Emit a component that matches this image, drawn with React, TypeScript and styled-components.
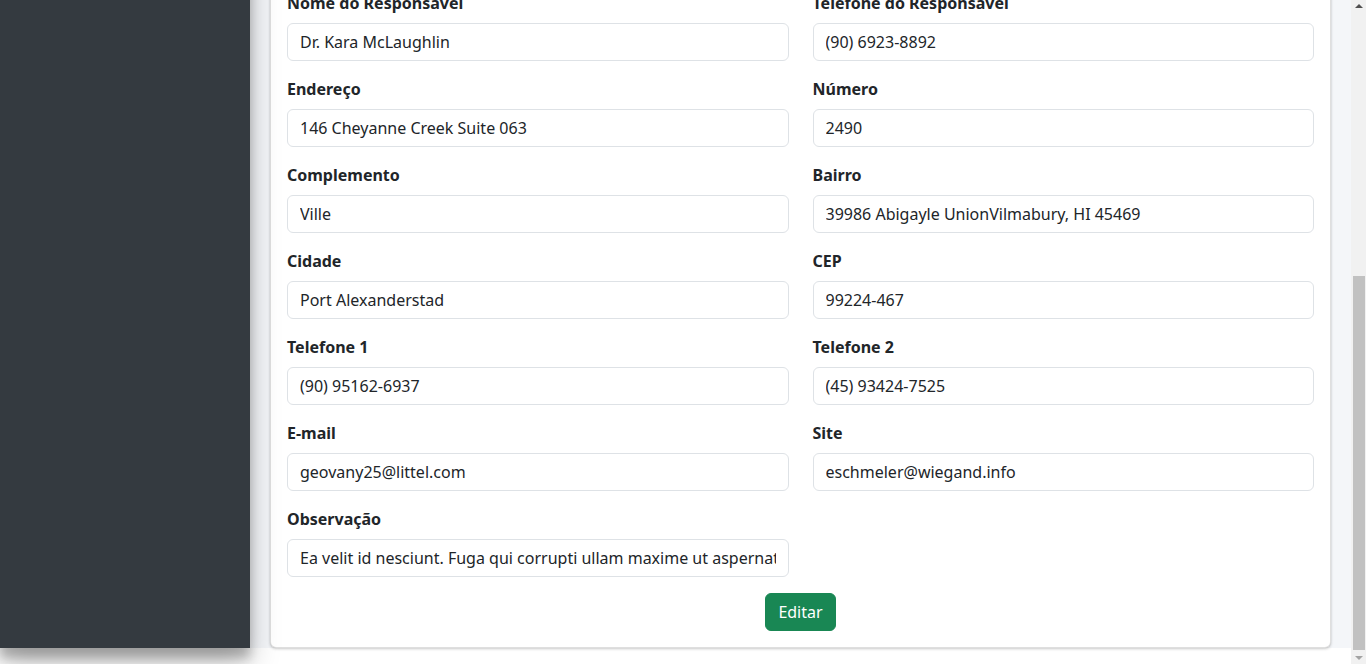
import React, { useLayoutEffect, useEffect } from "react";
import styled, { createGlobalStyle } from "styled-components";

const GlobalStyle = createGlobalStyle`
  html, body {
    margin: 0;
    padding: 0;
    background: #ffffff;
  }
  body {
    font-family: "Noto Sans", "Liberation Sans", sans-serif;
    font-size: 16px;
    line-height: 24px;
    color: #212529;
  }
  *, *::before, *::after { box-sizing: border-box; }
`;

const Wrapper = styled.div`
  display: flex;
  align-items: stretch;
  margin-bottom: 16px;
  margin-right: 15px;
`;

const Sidebar = styled.aside`
  position: relative;
  z-index: 2;
  width: 250px;
  flex-shrink: 0;
  background: #343a40;
  box-shadow: 0 14px 28px rgba(0, 0, 0, 0.25), 0 10px 10px rgba(0, 0, 0, 0.22);
  display: flex;
  flex-direction: column;
`;

const Brand = styled.div`
  height: 57px;
  padding: 0 16px;
  display: flex;
  align-items: center;
  color: rgba(255, 255, 255, 0.8);
  font-size: 20px;
  font-weight: 300;
  border-bottom: 1px solid #4b545c;
`;

const NavList = styled.nav`
  display: flex;
  flex-direction: column;
  gap: 4px;
  padding: 8px;
`;

const NavItem = styled.div<{ $active?: boolean }>`
  padding: 8px 16px;
  border-radius: 4px;
  color: ${(p) => (p.$active ? "#fff" : "#c2c7d0")};
  background: ${(p) => (p.$active ? "#007bff" : "transparent")};
  font-size: 16px;
`;

const Main = styled.main`
  flex: 1;
  min-width: 0;
  background: #f4f6f9;
  padding: 20px 20px 0 20px;
`;

const Breadcrumb = styled.div`
  height: 24px;
  margin-bottom: 8px;
  font-size: 14px;
  color: #6c757d;
`;

const PageTitle = styled.h1`
  margin: 0 0 9px;
  font-size: 28px;
  line-height: 34px;
  font-weight: 500;
`;

const Card = styled.div`
  background: #ffffff;
  border: 1px solid rgba(0, 0, 0, 0.125);
  border-radius: 6px;
  box-shadow: 0 0 1px rgba(0, 0, 0, 0.125), 0 1px 3px rgba(0, 0, 0, 0.2);
  padding: 16px;
`;

const FormGrid = styled.div`
  display: grid;
  grid-template-columns: 1fr 1fr;
  column-gap: 24px;
  row-gap: 16px;
`;

const Field = styled.div`
  display: flex;
  flex-direction: column;
  min-width: 0;
`;

const Label = styled.label`
  display: block;
  font-weight: 700;
  font-size: 16px;
  line-height: 24px;
  margin-bottom: 8px;
  color: #212529;
`;

const Input = styled.input`
  display: block;
  width: 100%;
  height: 38px;
  padding: 6px 12px;
  font-family: "Noto Sans", "Liberation Sans", sans-serif;
  font-size: 16px;
  line-height: 24px;
  color: #212529;
  background: #ffffff;
  border: 1px solid #dee2e6;
  border-radius: 6px;
  outline: none;
`;

const Actions = styled.div`
  display: flex;
  justify-content: center;
  margin-top: 16px;
`;

const Button = styled.button`
  height: 38px;
  padding: 6px 12px;
  font-family: "Noto Sans", "Liberation Sans", sans-serif;
  font-size: 16px;
  line-height: 24px;
  color: #ffffff;
  background: #198754;
  border: 1px solid #198754;
  border-radius: 6px;
  cursor: pointer;
`;

/* Window scrollbar, drawn over the right edge of the viewport */
const ScrollTrack = styled.div`
  position: fixed;
  top: 0;
  right: 0;
  width: 15px;
  height: 100vh;
  background: #f1f1f1;
  z-index: 10;
`;

const ScrollThumb = styled.div`
  position: absolute;
  left: 2px;
  right: 1px;
  top: 276px;
  bottom: 14px;
  background: #c1c1c1;
`;

const ScrollArrow = styled.div<{ $dir: "up" | "down"; $color: string }>`
  position: absolute;
  left: 4px;
  width: 0;
  height: 0;
  border-left: 4px solid transparent;
  border-right: 4px solid transparent;
  ${(p) =>
    p.$dir === "up"
      ? `top: 4px; border-bottom: 4px solid ${p.$color};`
      : `bottom: 4px; border-top: 4px solid ${p.$color};`}
`;

type F = { label: string; value: string };

const fields: F[] = [
  { label: "Razão Social", value: "Hessel, Kub and Schaefer" },
  { label: "Nome Fantasia", value: "Kub Group" },
  { label: "CNPJ", value: "12.345.678/0001-90" },
  { label: "Inscrição Estadual", value: "123.456.789.110" },
  { label: "Inscrição Municipal", value: "9876543" },
  { label: "Tipo", value: "Cliente" },
  { label: "Ramo de Atividade", value: "Comércio" },
  { label: "Status", value: "Ativo" },
  { label: "Nome do Responsável", value: "Dr. Kara McLaughlin" },
  { label: "Telefone do Responsável", value: "(90) 6923-8892" },
  { label: "Endereço", value: "146 Cheyanne Creek Suite 063" },
  { label: "Número", value: "2490" },
  { label: "Complemento", value: "Ville" },
  { label: "Bairro", value: "39986 Abigayle UnionVilmabury, HI 45469" },
  { label: "Cidade", value: "Port Alexanderstad" },
  { label: "CEP", value: "99224-467" },
  { label: "Telefone 1", value: "(90) 95162-6937" },
  { label: "Telefone 2", value: "(45) 93424-7525" },
  { label: "E-mail", value: "geovany25@littel.com" },
  { label: "Site", value: "eschmeler@wiegand.info" },
  {
    label: "Observação",
    value:
      "Ea velit id nesciunt. Fuga qui corrupti ullam maxime ut aspernatur quia. Dolorem voluptas et sint.",
  },
];

export default function App() {
  const toBottom = () =>
    window.scrollTo(0, document.documentElement.scrollHeight);
  useLayoutEffect(() => {
    toBottom();
  }, []);
  useEffect(() => {
    toBottom();
    const r = requestAnimationFrame(toBottom);
    const t = setTimeout(toBottom, 50);
    return () => {
      cancelAnimationFrame(r);
      clearTimeout(t);
    };
  }, []);

  return (
    <>
      <GlobalStyle />
      <Wrapper>
        <Sidebar>
          <Brand>Sistema</Brand>
          <NavList>
            <NavItem>Dashboard</NavItem>
            <NavItem $active>Clientes</NavItem>
            <NavItem>Fornecedores</NavItem>
            <NavItem>Relatórios</NavItem>
          </NavList>
        </Sidebar>
        <Main>
          <Breadcrumb>Início / Clientes / Editar</Breadcrumb>
          <PageTitle>Editar Cliente</PageTitle>
          <Card>
            <FormGrid>
              {fields.map((f, i) => (
                <Field key={i}>
                  <Label htmlFor={`f${i}`}>{f.label}</Label>
                  <Input id={`f${i}`} type="text" defaultValue={f.value} />
                </Field>
              ))}
            </FormGrid>
            <Actions>
              <Button type="button">Editar</Button>
            </Actions>
          </Card>
        </Main>
      </Wrapper>
      <ScrollTrack aria-hidden="true">
        <ScrollArrow $dir="up" $color="#505050" />
        <ScrollThumb />
        <ScrollArrow $dir="down" $color="#a3a3a3" />
      </ScrollTrack>
    </>
  );
}
